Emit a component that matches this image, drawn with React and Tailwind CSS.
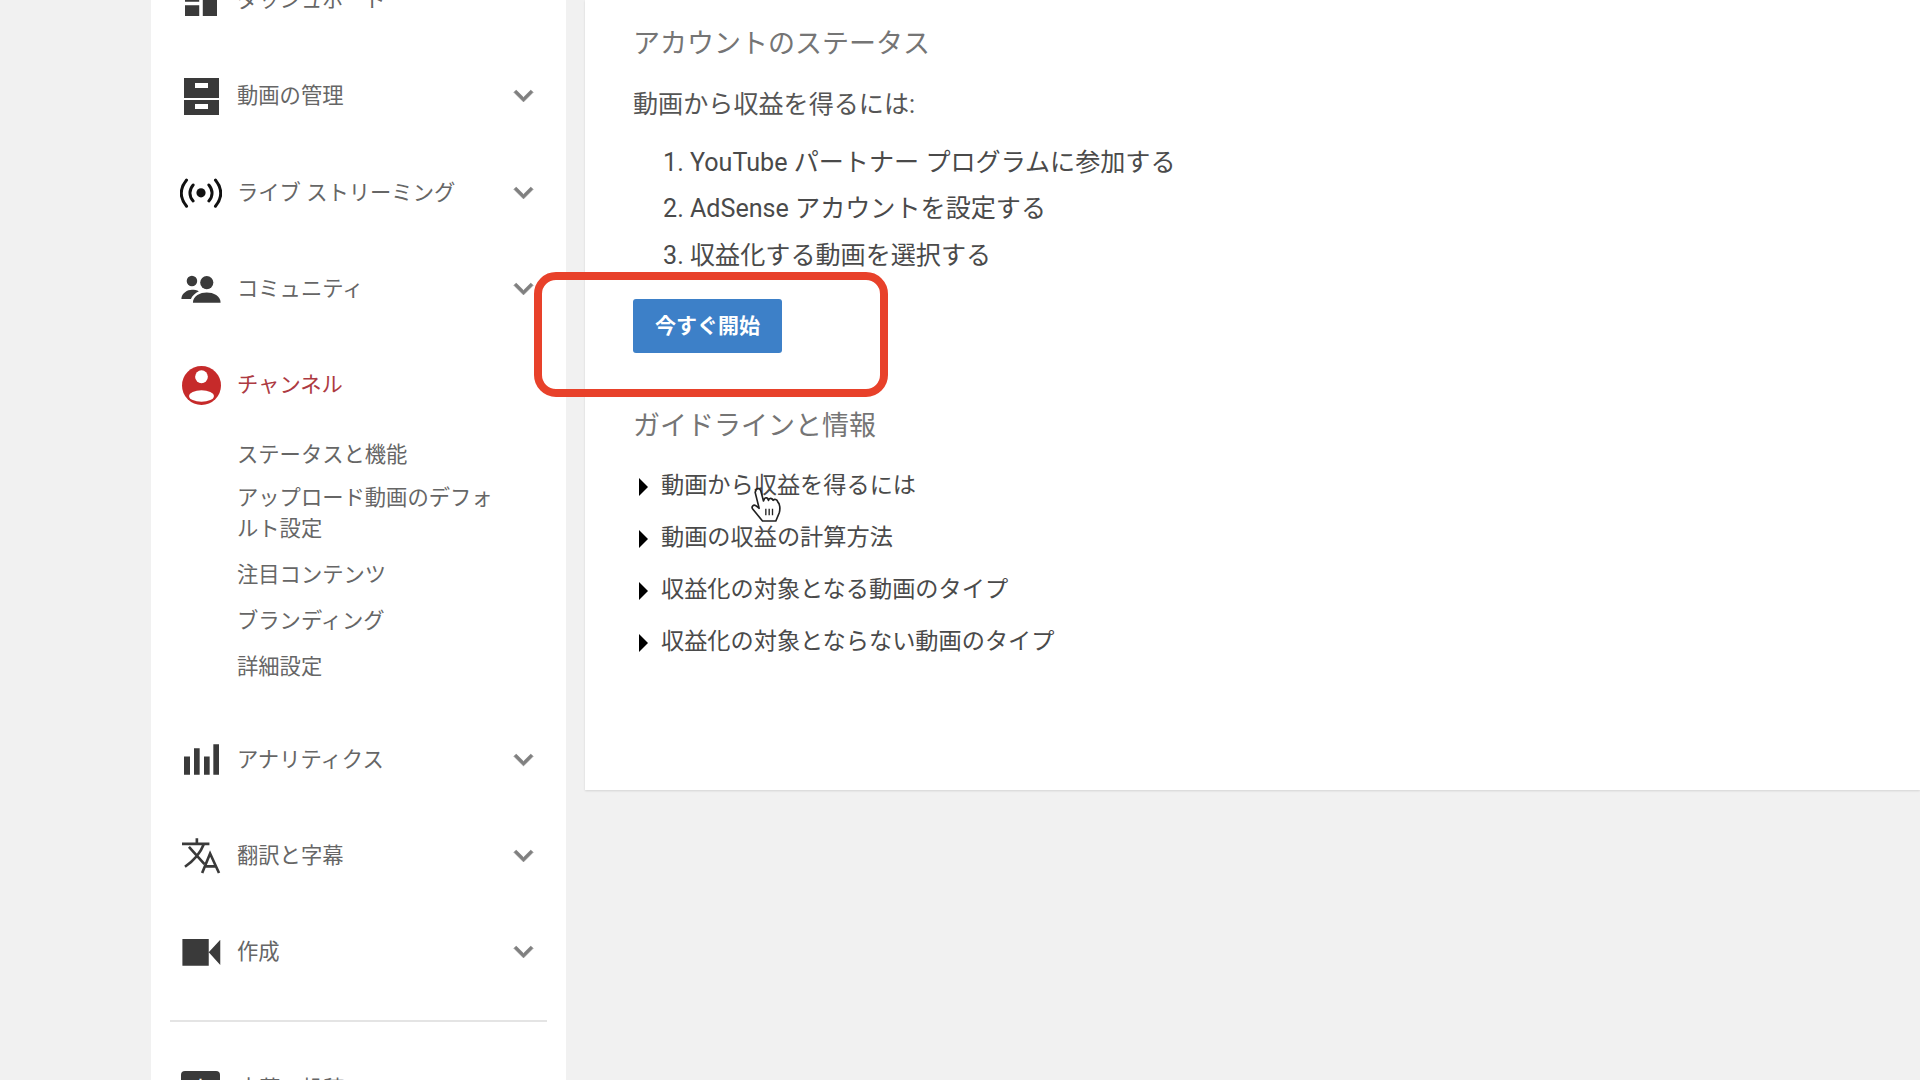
import React from 'react';

const DashboardIcon = () => (
  <svg viewBox="3 3 18 18" className="w-[32px] h-[32px] fill-[#3a3a3a]">
    <path d="M3 13h8V3H3v10zm0 8h8v-6H3v6zm10 0h8V11h-8v10zm0-18v6h8V3h-8z" />
  </svg>
);

const DrawerIcon = () => (
  <svg viewBox="0 0 35 37" className="w-[35px] h-[37px] fill-[#3a3a3a]">
    <path fillRule="evenodd" d="M0 0h35v20H0zM11 5v5h13V5zM0 22h35v15H0zM11 26v5h13v-5z" />
  </svg>
);

const LiveIcon = () => (
  <svg viewBox="28 50 128 95" className="w-[42px] h-[32px] fill-none stroke-[#111111]">
    <circle cx="92" cy="97" r="14" fill="#111111" stroke="none" />
    <path strokeWidth="9" strokeLinecap="round" d="M68 73C55 88 55 108 68 122M116 73C129 88 129 108 116 122M48 58C27 84 27 112 48 138M136 58C157 84 157 112 136 138" />
  </svg>
);

const PeopleIcon = () => (
  <svg viewBox="30 42 125 88" className="w-[42px] h-[29px] fill-[#3a3a3a]">
    <circle cx="65" cy="60" r="16" />
    <circle cx="110" cy="65" r="20" />
    <path d="M68 126C68 105 90 95 110 95C130 95 152 105 152 126Z" />
    <path d="M33 115C33 97 52 87 65 87C72 87 80 88 86 91C75 97 65 105 62 115Z" />
  </svg>
);

const ChannelIcon = () => (
  <svg viewBox="34 318 116 116" className="w-[39px] h-[39px]">
    <circle cx="92" cy="376" r="58" fill="#c62a2a" />
    <circle cx="92" cy="350" r="19" fill="#ffffff" />
    <ellipse cx="92" cy="407" rx="37" ry="17" fill="#ffffff" />
  </svg>
);

const ChartIcon = () => (
  <svg viewBox="0 0 105 92" className="w-[35px] h-[31px] fill-[#3a3a3a]">
    <path d="M0 37h18v55H0zM30 12h17v80H30zM60 37h17v55H60zM88 0h17v92H88z" />
  </svg>
);

const TranslateIcon = () => (
  <svg viewBox="30 20 125 115" className="w-[42px] h-[38px] fill-none stroke-[#3a3a3a]" strokeWidth="8">
    <path d="M35 41H118M80 24V41M56 50L103 102M101 42C90 70 70 92 44 110" />
    <path d="M96 129L120 70L147 129M105 109H138" />
  </svg>
);

const CameraIcon = () => (
  <svg viewBox="0 0 116 82" className="w-[39px] h-[27px] fill-[#3a3a3a]">
    <path d="M0 0h80v81H0zM80 40L115 2V79z" />
  </svg>
);

const Chevron = () => (
  <svg viewBox="6 8.59 12 7.41" className="w-[19px] h-[12px] fill-[#808080] stroke-[#808080] stroke-[0.5] overflow-visible">
    <path d="M16.59 8.59L12 13.17 7.41 8.59 6 10l6 6 6-6z" />
  </svg>
);

const NavRow = ({ icon, label, active, chevron = true }) => (
  <div className="h-[96.3px] flex items-center pr-[33px]">
    <div className="w-[42px] ml-[29px] flex justify-center shrink-0">{icon}</div>
    <span className={`ml-[15px] flex-1 text-[21.3px] ${active ? 'text-[#ad3a42]' : 'text-[#666666]'}`}>{label}</span>
    {chevron && <Chevron />}
  </div>
);

const Sidebar = () => (
  <aside className="w-[415px] shrink-0 bg-white">
    <div className="-mt-[48px]">
      <NavRow icon={<DashboardIcon />} label="ダッシュボード" chevron={false} />
      <NavRow icon={<DrawerIcon />} label="動画の管理" />
      <NavRow icon={<LiveIcon />} label="ライブ ストリーミング" />
      <NavRow icon={<PeopleIcon />} label="コミュニティ" />
      <NavRow icon={<ChannelIcon />} label="チャンネル" active chevron={false} />
      <div className="pl-[86px] pr-[70px] pt-[6px] pb-[29px] text-[21.3px] leading-[31px] text-[#666666]">
        <div>ステータスと機能</div>
        <div className="mt-[12px]">アップロード動画のデフォルト設定</div>
        <div className="mt-[15px]">注目コンテンツ</div>
        <div className="mt-[15px]">ブランディング</div>
        <div className="mt-[15px]">詳細設定</div>
      </div>
      <NavRow icon={<ChartIcon />} label="アナリティクス" />
      <NavRow icon={<TranslateIcon />} label="翻訳と字幕" />
      <NavRow icon={<CameraIcon />} label="作成" />
      <div className="mt-[20px] mx-[19px] h-[2px] bg-[#e4e4e4]" />
      <div className="mt-[49px] flex items-start">
        <div className="ml-[30px] w-[39px] h-[40px] shrink-0 rounded-[4px] bg-[#3a3a3a] flex items-center justify-center text-white text-[24px] leading-none">字</div>
        <span className="ml-[18px] mt-[2px] text-[21.3px] leading-[31px] text-[#666666]">字幕の投稿</span>
      </div>
    </div>
  </aside>
);

const links = [
  '動画から収益を得るには',
  '動画の収益の計算方法',
  '収益化の対象となる動画のタイプ',
  '収益化の対象とならない動画のタイプ',
];

const Content = () => (
  <main className="ml-[19px] flex-1 h-[790px] bg-white pl-[48px] pt-[23px] shadow-[0_1px_2px_rgba(0,0,0,0.12)]">
    <h2 className="text-[27px] leading-[42px] font-normal text-[#757575]">アカウントのステータス</h2>
    <p className="mt-[20px] text-[25.1px] leading-[40px] text-[#555555]">動画から収益を得るには:</p>
    <ol className="mt-[15px] pl-[57px] list-decimal text-[25.1px] leading-[46.4px] text-[#4a4a4a]">
      <li>YouTube パートナー プログラムに参加する</li>
      <li>AdSense アカウントを設定する</li>
      <li>収益化する動画を選択する</li>
    </ol>
    <button className="mt-[20px] w-[149px] h-[54px] pt-[2px] rounded-[3px] bg-[#3d80c8] text-white text-[21px] font-bold">今すぐ開始</button>
    <h2 className="mt-[52px] text-[27px] leading-[42px] font-normal text-[#757575]">ガイドラインと情報</h2>
    <ul className="mt-[12px]">
      {links.map((item) => (
        <li key={item} className="h-[52px] flex items-center pl-[6px] text-[23.2px] text-[#4a4a4a]">
          <span className="w-0 h-0 mt-[3px] border-y-[9px] border-y-transparent border-l-[9px] border-l-black" />
          <span className="ml-[13px]">{item}</span>
        </li>
      ))}
    </ul>
  </main>
);

const HandCursor = () => (
  <svg viewBox="15 20 95 108" className="absolute left-[750px] top-[487px] w-[32px] h-[36px]">
    <path
      d="M33 28C38 22 45 25 47 32L55 62L58 55C62 50 68 52 70 60C72 52 80 52 84 60C88 55 96 57 98 65C104 70 106 85 102 98L92 122L52 122L22 85C18 78 25 72 32 76L42 84L30 36Z"
      fill="#ffffff"
      stroke="#222222"
      strokeWidth="5"
      strokeLinejoin="round"
    />
    <path d="M62 85V105M72 85V105M82 85V105" stroke="#222222" strokeWidth="4" fill="none" />
  </svg>
);

export default function App() {
  return (
    <div className="relative h-[1080px] overflow-hidden bg-[#f1f1f1] pl-[151px] flex font-['Roboto','Noto_Sans_CJK_JP',sans-serif]">
      <Sidebar />
      <Content />
      <div className="absolute left-[534px] top-[272px] w-[354px] h-[125px] border-[8px] border-[#e8412a] rounded-[22px]" />
      <HandCursor />
    </div>
  );
}
